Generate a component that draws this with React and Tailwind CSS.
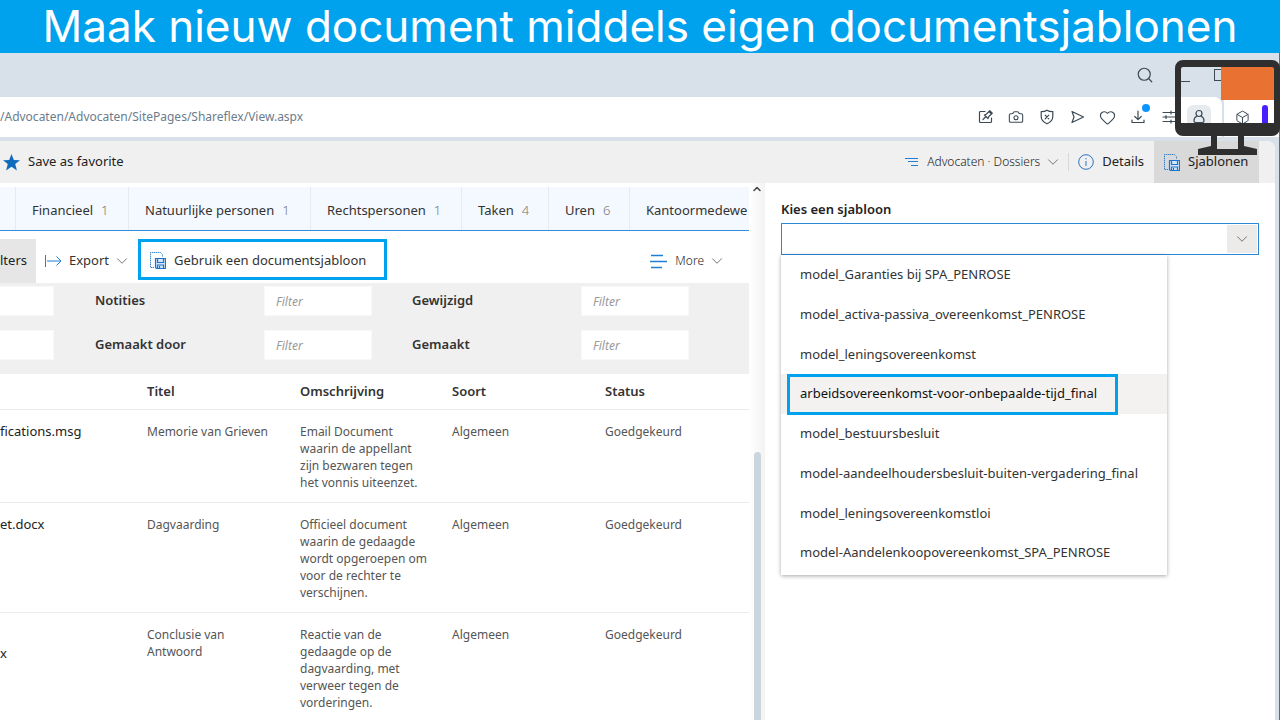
import React, { useState } from "react";
import { Box, Camera, ChevronDown, ChevronUp, Heart, Search } from "lucide-react";

const TABS = [
  { label: "Financieel", count: 1, width: "w-[113px]" },
  { label: "Natuurlijke personen", count: 1, width: "w-[182px]" },
  { label: "Rechtspersonen", count: 1, width: "w-[151px]" },
  { label: "Taken", count: 4, width: "w-[87px]" },
  { label: "Uren", count: 6, width: "w-[81px]" },
  { label: "Kantoormedewe", width: "w-[120px]" },
];

const FILTER_ROWS = [
  ["Notities", "Gewijzigd"],
  ["Gemaakt door", "Gemaakt"],
];

const DOCUMENTS = [
  {
    name: "fications.msg",
    title: "Memorie van Grieven",
    description: "Email Document waarin de appellant zijn bezwaren tegen het vonnis uiteenzet.",
    kind: "Algemeen",
    status: "Goedgekeurd",
    height: "h-[93px]",
    namePad: "pt-[13px]",
  },
  {
    name: "et.docx",
    title: "Dagvaarding",
    description: "Officieel document waarin de gedaagde wordt opgeroepen om voor de rechter te verschijnen.",
    kind: "Algemeen",
    status: "Goedgekeurd",
    height: "h-[110px]",
    namePad: "pt-[13px]",
  },
  {
    name: "x",
    title: "Conclusie van Antwoord",
    description: "Reactie van de gedaagde op de dagvaarding, met verweer tegen de vorderingen.",
    kind: "Algemeen",
    status: "Goedgekeurd",
    height: "h-[110px]",
    namePad: "pt-8",
  },
];

const TEMPLATES = [
  "model_Garanties bij SPA_PENROSE",
  "model_activa-passiva_overeenkomst_PENROSE",
  "model_leningsovereenkomst",
  "arbeidsovereenkomst-voor-onbepaalde-tijd_final",
  "model_bestuursbesluit",
  "model-aandeelhoudersbesluit-buiten-vergadering_final",
  "model_leningsovereenkomstloi",
  "model-Aandelenkoopovereenkomst_SPA_PENROSE",
];

const TemplateIcon = () => (
  <svg viewBox="0 0 16 17" className="h-[17px] w-4 shrink-0" fill="none" stroke="#1f74c9">
    <path d="M12.5 4.500v-2l-2-2H.5v15h4" strokeDasharray="1.2 0.8" />
    <path d="M5.500 6.500h10v10h-9l-1-1z" fill="#d3e6f8" strokeWidth="1.200" />
    <path d="M7.500 6.500v4h6v-4M7.500 16.500v-3.500h6v3.500M9.500 14v2.500" strokeWidth="1.200" />
  </svg>
);

const Chevron = () => <ChevronDown size={18} strokeWidth={1.2} className="shrink-0 text-[#666]" />;

const ToolbarSvg = ({ children }) => (
  <svg
    viewBox="0 0 16 16"
    className="h-4 w-4"
    fill="none"
    stroke="currentColor"
    strokeWidth="1.2"
    strokeLinecap="round"
    strokeLinejoin="round"
  >
    {children}
  </svg>
);

const AddressIcons = () => (
  <div className="flex w-[237px] items-center justify-between text-[#3c4a55]">
    <button aria-label="Notitie" className="flex h-6 w-6 items-center justify-center">
      <ToolbarSvg>
        <path d="M7 2.500H2.500a1 1 0 0 0-1 1v9a1 1 0 0 0 1 1h10a1 1 0 0 0 1-1V9" />
        <path d="M5 10.500l2.500-2.500M6.500 6l3.500 3.500.8-2L13.500 5 11 2.500 8.500 5zM11 2.500l.8-.8 2.500 2.500-.8.8" />
      </ToolbarSvg>
    </button>
    <button aria-label="Schermafbeelding" className="flex h-6 w-6 items-center justify-center">
      <Camera size={16} strokeWidth={1.6} />
    </button>
    <button aria-label="Bescherming" className="flex h-6 w-6 items-center justify-center">
      <ToolbarSvg>
        <path d="M8 1.200C6.500 2.300 4.500 2.700 2.200 2.700V7.500c0 3.500 2.300 5.700 5.800 7.300 3.500-1.600 5.800-3.800 5.800-7.300V2.700C11.500 2.700 9.500 2.300 8 1.200z" />
        <path d="M6.200 6.200l3.600 3.600M9.800 6.200L6.200 9.800" />
      </ToolbarSvg>
    </button>
    <button aria-label="Verzenden" className="flex h-6 w-6 items-center justify-center">
      <ToolbarSvg>
        <path d="M3 2.500L14.500 8 3 13.500 5 8z" />
      </ToolbarSvg>
    </button>
    <button aria-label="Favoriet" className="flex h-6 w-6 items-center justify-center">
      <Heart size={17} strokeWidth={1.600} />
    </button>
    <button aria-label="Downloads" className="relative flex h-6 w-6 items-center justify-center">
      <ToolbarSvg>
        <path d="M8 2v8.500M4.800 7.500L8 10.600l3.200-3.100M2 11v2.500h12V11" />
      </ToolbarSvg>
      <span className="absolute -top-px right-0 h-2 w-2 rounded-full bg-[#0a95ff]" />
    </button>
    <button aria-label="Instellingen" className="flex h-6 w-6 items-center justify-center">
      <ToolbarSvg>
        <path d="M2 3.500h12M2 8h12M2 12.500h12M10 2v3M5 6.500v3M10 11v3" />
      </ToolbarSvg>
    </button>
    <button
      aria-label="Profiel"
      className="flex h-6 w-6 items-center justify-center rounded-md bg-[#e6ebf0]"
    >
      <ToolbarSvg>
        <circle cx="8" cy="4.500" r="3" />
        <path d="M6 7C4 8 3 9.500 3 11.500 3 13 4 13.700 5 13.700h6c1 0 2-.7 2-2.200C13 9.500 12 8 10 7" />
      </ToolbarSvg>
    </button>
  </div>
);

// monitor drawing that lies over the window controls
const MonitorBadge = () => (
  <svg viewBox="0 0 106 97" className="pointer-events-none absolute top-[59px] right-0 h-[97px] w-[106px]">
    <rect x="47" y="8" width="53" height="33" fill="#e97132" />
    <path
      fill="#2f2f2f"
      fillRule="evenodd"
      d="M9 1h89a8 8 0 0 1 8 8v60a8 8 0 0 1-8 8H9a8 8 0 0 1-8-8V9a8 8 0 0 1 8-8zM9 8a2 2 0 0 0-2 2v54h93V10a2 2 0 0 0-2-2z"
    />
    <path fill="#2f2f2f" d="M37 76h6v14h21V76h6v11l13 3v6H24v-6l13-3z" />
  </svg>
);

const CommandBar = () => (
  <div className="flex h-[42px] items-center rounded-tr-lg bg-[#f0f0f0] pr-4 text-[13px] text-[#222]">
    <button className="flex items-center gap-2 pl-[3px]">
      <svg viewBox="0 0 16 16" className="h-[17px] w-[17px]">
        <path
          fill="#0f6cbd"
          d="M8 0l2.200 5.600 5.800.2-4.500 3.700L13.100 15.500 8 12.100 2.900 15.500 4.500 9.500 0 5.800l5.800-.2z"
        />
      </svg>
      Save as favorite
    </button>
    <div className="ml-auto flex h-full items-center">
      <button className="flex items-center text-xs font-light text-[#222]">
        <svg viewBox="0 0 14 10" className="mr-2 h-[10px] w-[14px]" stroke="#1f7fd4" strokeWidth="1.200">
          <path d="M0 1.500h13M3 4.500h10M6 8.500h7" />
        </svg>
        <span className="mr-1">Advocaten · Dossiers</span>
        <Chevron />
      </button>
      <span className="mr-[9px] ml-[6px] h-[18px] w-px bg-[#d8d8d8]" />
      <button className="flex items-center gap-2">
        <svg viewBox="0 0 16 16" className="h-4 w-4" fill="none" stroke="#2b72c4">
          <circle cx="8" cy="8" r="7.300" />
          <path d="M8 7v5M8 4v1.300" />
        </svg>
        Details
      </button>
      <button className="ml-[10px] flex h-full w-[105px] items-center gap-2 bg-[#d9d9d9] pl-[10px]">
        <TemplateIcon />
        Sjablonen
      </button>
    </div>
  </div>
);

const Tabs = () => (
  <nav className="mt-1 flex h-11 overflow-hidden border-b border-[#2f8de0] bg-[#f3f9fe]">
    <span className="w-[15px] shrink-0" />
    {TABS.map((tab) => (
      <a
        key={tab.label}
        href="#"
        className={`flex shrink-0 items-center gap-2 border-l border-[#e6ebef] pt-1 pl-4 text-[13px] text-[#333] ${tab.width}`}
      >
        {tab.label}
        {tab.count && <span className="font-light text-[#777]">{tab.count}</span>}
      </a>
    ))}
  </nav>
);

const Toolbar = () => (
  <div className="flex h-[52px] pt-2 text-[13px] text-[#333]">
    <button className="h-[44px] w-9 overflow-hidden bg-[#e6e6e6] text-left text-[#222]">lters</button>
    <button className="ml-2 flex h-[44px] w-[94px] items-center">
      <svg viewBox="0 0 18 14" className="mr-[7px] h-[14px] w-[18px]" fill="none" stroke="#1f7fd4">
        <path d="M1.500 1v12M3 7h14M12.500 2.500L17 7l-4.500 4.500" />
      </svg>
      <span className="mr-1">Export</span>
      <Chevron />
    </button>
    <button className="flex h-[41px] w-[249px] items-center gap-2 border-3 border-[#00a2ed] pt-[2px] pl-[9px] text-[#333]">
      <TemplateIcon />
      Gebruik een documentsjabloon
    </button>
    <button className="mr-[23px] ml-auto flex h-[44px] items-center text-xs font-light text-[#222]">
      <svg viewBox="0 0 17 15" className="mr-2 h-[15px] w-[17px]" stroke="#1f7fd4" strokeWidth="1.500">
        <path d="M1 1.500h12M0 7.500h17M1 13.500h11" />
      </svg>
      <span className="mr-1">More</span>
      <Chevron />
    </button>
  </div>
);

const FilterInput = ({ label, placeholder }) => (
  <input
    aria-label={label}
    placeholder={placeholder}
    className="h-[30px] w-[108px] border border-[#f8f8f8] bg-white pl-[11px] text-xs italic placeholder:text-[#999]"
  />
);

const Filters = () => (
  <div className="flex h-[91px] flex-col gap-[14px] bg-[#f0f0f0] pt-[3px]">
    {FILTER_ROWS.map((row, i) => (
      <div key={row[0]} className="flex items-center">
        <div className="mr-[41px] -ml-[54px]">
          <FilterInput label={`Filter ${i + 1}`} />
        </div>
        {row.map((label) => (
          <div key={label} className="mr-10 flex items-center">
            <span className="w-[169px] text-[13px] font-semibold text-[#333]">{label}</span>
            <FilterInput label={label} placeholder="Filter" />
          </div>
        ))}
      </div>
    ))}
  </div>
);

const DocumentTable = () => (
  <table className="w-full table-fixed text-left text-xs leading-[17px] text-[#555]">
    <thead>
      <tr className="h-[35px] border-b border-[#ebebeb] text-[13px] text-[#333]">
        <th className="w-[147px]" aria-label="Naam" />
        <th className="w-[153px] font-semibold">Titel</th>
        <th className="w-[152px] font-semibold">Omschrijving</th>
        <th className="w-[153px] font-semibold">Soort</th>
        <th className="font-semibold">Status</th>
      </tr>
    </thead>
    <tbody>
      {DOCUMENTS.map((doc) => (
        <tr key={doc.title} className={`border-b border-[#ebebeb] align-top ${doc.height}`}>
          <td className={`text-[13px] text-[#222] ${doc.namePad}`}>{doc.name}</td>
          <td className="pt-[13px] pr-5">{doc.title}</td>
          <td className="pt-[13px] pr-5">{doc.description}</td>
          <td className="pt-[13px]">{doc.kind}</td>
          <td className="pt-[13px]">{doc.status}</td>
        </tr>
      ))}
    </tbody>
  </table>
);

const TemplatePanel = () => {
  const [value, setValue] = useState("");
  const highlighted = 3;

  return (
    <aside className="w-[510px] shrink-0 bg-white pt-[15px] pr-4 pl-4">
      <label htmlFor="template" className="block h-[25px] text-[13px] leading-[22px] font-semibold text-[#222]">
        Kies een sjabloon
      </label>
      <div className="relative">
        <div className="flex h-8 border border-[#2b88d8]">
          <input
            id="template"
            role="combobox"
            aria-expanded="true"
            aria-controls="template-list"
            value={value}
            onChange={(e) => setValue(e.target.value)}
            className="min-w-0 flex-1 px-2 text-[13px] outline-none"
          />
          <button
            aria-label="Openen"
            className="m-px flex w-[30px] items-center justify-center bg-[#edebe9]"
          >
            <Chevron />
          </button>
        </div>
        <ul
          id="template-list"
          role="listbox"
          className="absolute top-full left-0 grid h-[320px] w-[386px] grid-rows-8 bg-white pb-[2px] text-[13px] text-[#333] shadow-[0_1px_4px_rgba(0,0,0,0.35)]"
        >
          {TEMPLATES.map((name, i) => (
            <li
              key={name}
              role="option"
              aria-selected={i === highlighted}
              className={
                i === highlighted
                  ? "flex min-h-0 items-center bg-[#f3f2f1] pl-[6px] text-[#111]"
                  : "flex min-h-0 items-center pl-[19px]"
              }
            >
              {i === highlighted ? (
                <span className="flex h-[41px] w-[331px] shrink-0 items-center border-3 border-[#00a2ed] pl-[10px] whitespace-nowrap">
                  {name}
                </span>
              ) : (
                name
              )}
            </li>
          ))}
        </ul>
      </div>
    </aside>
  );
};

const App = () => {
  return (
    <div className="relative flex h-screen flex-col overflow-hidden bg-[#d8e1e9] font-['Noto_Sans','Open_Sans',sans-serif]">
      <h1 className="h-[53px] shrink-0 bg-[#00a2ed] text-center font-['Inter','Noto_Sans',sans-serif] text-[44px] leading-[53px] whitespace-nowrap text-white">
        Maak nieuw document middels eigen documentsjablonen
      </h1>

      {/* browser window */}
      <div className="flex min-h-0 flex-1 flex-col border-r border-[#5f6b76]">
        <div className="flex h-11 shrink-0 items-center justify-end gap-6 pr-[53px] text-[#3c4a55]">
          <Search size={18} strokeWidth={1.600} />
          <span className="mt-3 h-px w-3 bg-[#3c4a55]" />
          <span className="h-3 w-3 border border-[#3c4a55]" />
        </div>
        <div className="flex h-10 shrink-0 gap-[2px]">
          <div className="flex min-w-0 flex-1 items-center rounded-tr-lg bg-white pr-[11px]">
            <span className="flex-1 truncate text-xs text-[#6b7c8c]">
              /Advocaten/Advocaten/SitePages/Shareflex/View.aspx
            </span>
            <AddressIcons />
          </div>
          <div className="flex w-[55px] items-center bg-white pl-[11px] text-[#3c4a55]">
            <Box size={15} strokeWidth={1.600} />
            <span className="ml-3 h-6 w-[6px] rounded-full bg-[#4a1fff]" />
          </div>
        </div>

        <div className="mt-1 mr-1 flex min-h-0 flex-1 flex-col rounded-tr-lg bg-white">
          <CommandBar />
          <div className="flex min-h-0 flex-1">
            <main className="min-w-0 flex-1 overflow-hidden">
              <Tabs />
              <Toolbar />
              <Filters />
              <DocumentTable />
            </main>
            <div className="flex w-4 shrink-0 flex-col items-center bg-linear-to-r from-white to-[#f3f3f3] text-[#444]">
              <ChevronUp size={12} strokeWidth={3} />
              <div className="mt-[257px] w-[7px] flex-1 rounded-t-full bg-[#cbd5dd]" />
            </div>
            <TemplatePanel />
          </div>
        </div>
      </div>

      <MonitorBadge />
    </div>
  );
};

export default App;
